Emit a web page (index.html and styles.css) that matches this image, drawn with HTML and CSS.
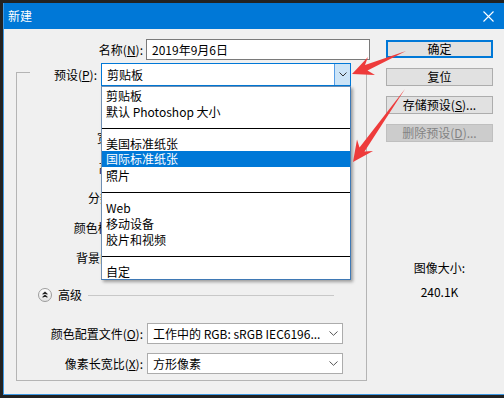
FILE: index.html
```html
<!DOCTYPE html>
<html lang="zh-CN">
<head>
<meta charset="utf-8">
<title>新建</title>
<link rel="stylesheet" href="styles.css">
</head>
<body>
<div class="window">
  <div class="titlebar">
    <span class="title">新建</span>
    <svg class="close" width="11" height="11" viewBox="0 0 11 11"><path d="M0.5 0.5L10.5 10.5M10.5 0.5L0.5 10.5" stroke="#fff" stroke-width="1.1" fill="none"/></svg>
  </div>
  <div class="content">
    <div class="main">
      <div class="name-row">
        <label class="lbl name-lbl">名称(<u>N</u>):</label>
        <div class="textbox">2019年9月6日</div>
      </div>
      <div class="preset-head">
        <span class="stub"></span>
        <label class="lbl preset-lbl">预设(<u>P</u>):</label>
        <div class="combo">
          <span class="combo-text">剪贴板</span>
          <span class="combo-btn"><svg width="8" height="5" viewBox="0 0 8 5"><path d="M0.5 0.5L4 4L7.5 0.5" fill="none" stroke="#333" stroke-width="1"/></svg></span>
          <ul class="droplist">
            <li>剪贴板</li>
            <li>默认 Photoshop 大小</li>
            <li class="sep"></li>
            <li>美国标准纸张</li>
            <li class="sel">国际标准纸张</li>
            <li>照片</li>
            <li class="sep"></li>
            <li>Web</li>
            <li>移动设备</li>
            <li>胶片和视频</li>
            <li class="sep"></li>
            <li>自定</li>
          </ul>
        </div>
      </div>
      <div class="group">
        <div class="grid">
          <label class="lbl dim">大小(<u>I</u>):</label><div class="field"></div>
          <label class="lbl">宽度(<u>W</u>):</label><div class="field"></div>
          <label class="lbl">高度(<u>H</u>):</label><div class="field"></div>
          <label class="lbl">分辨率(<u>R</u>):</label><div class="field"></div>
          <label class="lbl">颜色模式(<u>M</u>):</label><div class="field"></div>
          <label class="lbl">背景内容(<u>C</u>):</label><div class="field"></div>
        </div>
        <div class="advanced">
          <svg class="adv-icon" width="14" height="14" viewBox="0 0 14 14"><defs><linearGradient id="advg" x1="0" y1="0" x2="0" y2="1"><stop offset="0" stop-color="#ffffff"/><stop offset="1" stop-color="#e2e2e2"/></linearGradient></defs><circle cx="7" cy="7" r="6.5" fill="url(#advg)" stroke="#9c9c9c"/><path d="M4.6 6.4L7 4.2L9.4 6.4M4.6 9.4L7 7.2L9.4 9.4" fill="none" stroke="#222" stroke-width="1.2"/></svg>
          <span class="adv-text">高级</span>
          <span class="adv-line"></span>
        </div>
        <div class="grid adv-grid">
          <label class="lbl">颜色配置文件(<u>O</u>):</label>
          <div class="select"><span class="select-text">工作中的 RGB: sRGB IEC6196...</span><svg width="9" height="5" viewBox="0 0 9 5"><path d="M0.5 0.5L4.5 4.3L8.5 0.5" fill="none" stroke="#555" stroke-width="1"/></svg></div>
          <label class="lbl">像素长宽比(<u>X</u>):</label>
          <div class="select"><span class="select-text">方形像素</span><svg width="9" height="5" viewBox="0 0 9 5"><path d="M0.5 0.5L4.5 4.3L8.5 0.5" fill="none" stroke="#555" stroke-width="1"/></svg></div>
        </div>
      </div>
    </div>
    <div class="side">
      <button class="btn default">确定</button>
      <button class="btn">复位</button>
      <button class="btn">存储预设(<u>S</u>)...</button>
      <button class="btn disabled">删除预设(<u>D</u>)...</button>
      <div class="info">
        <div>图像大小:</div>
        <div class="size">240.1K</div>
      </div>
    </div>
  </div>
</div>
<svg class="arrows" width="504" height="398" viewBox="0 0 504 398">
  <polygon points="352,74 375,75 367.5,70.5 406,51 365,65 368,57" fill="#ee3b3b"/>
  <polygon points="353,162 373,151 364.5,151.5 405,89 359.5,147.5 357,139.5" fill="#ee3b3b"/>
</svg>
</body>
</html>
```

FILE: styles.css
```css
* { box-sizing: border-box; }
html, body { margin: 0; padding: 0; }
body {
  position: relative;
  width: 504px;
  height: 398px;
  overflow: hidden;
  background: #222222;
  font-family: "Noto Sans CJK SC", "Noto Sans", sans-serif;
  font-size: 12px;
  color: #000;
}
u { text-decoration: underline; text-underline-offset: 1px; }

.window {
  margin: 3px 0 0 3px;
  width: 501px;
  height: 392px;
  background: #f0f0f0;
  border-left: 1px solid #3e98e2;
  border-bottom: 1px solid #3e98e2;
}
.titlebar {
  height: 26px;
  background: #0078d7;
  color: #fff;
  display: flex;
  align-items: center;
  justify-content: space-between;
  padding: 0 10px 0 4px;
}
.title { font-size: 12px; line-height: 26px; }

.content { display: flex; padding-top: 10px; }
.main { width: 366px; }

.lbl { text-align: right; white-space: nowrap; }
.lbl.dim { color: #000; }

.name-row { display: flex; align-items: center; height: 21px; }
.name-lbl { width: 139px; margin-right: 3px; }
.textbox {
  width: 224px;
  height: 21px;
  border: 1px solid #7a7a7a;
  background: #fff;
  padding-left: 5px;
  line-height: 19px;
}

.preset-head { display: flex; height: 23px; margin-top: 3px; }
.stub {
  align-self: flex-start;
  width: 14px;
  height: 0;
  margin: 9px 0 0 12px;
  border-top: 1px solid #b4b4b4;
}
.preset-lbl { width: 67px; margin-right: 4px; align-self: center; }
.combo {
  position: relative;
  display: flex;
  width: 250px;
  height: 23px;
  border: 1px solid #0078d7;
  background: #fff;
}
.combo-text { flex: 1; padding-left: 5px; line-height: 21px; }
.combo-btn {
  width: 16px;
  background: #cce4f7;
  border-left: 1px solid #569de5;
  display: flex;
  align-items: center;
  justify-content: center;
}

.droplist {
  position: absolute;
  z-index: 5;
  top: calc(100% + 1px);
  left: -1px;
  width: 250px;
  margin: 0;
  padding: 0;
  list-style: none;
  background: #fff;
  border: 1px solid #6f8fb3;
  border-right-color: #3f79b5;
  border-bottom-color: #3f79b5;
  box-shadow: 2px 2px 3px rgba(0, 0, 0, 0.35);
}
.droplist li {
  height: 16px;
  line-height: 16px;
  padding: 1px 0 0 4px;
  white-space: nowrap;
  overflow: visible;
}
.droplist li.sep { padding: 9px 0 0 0; }
.droplist li.sep::before {
  content: "";
  display: block;
  border-top: 1px solid #000;
}
.droplist li.sel { background: #0078d7; color: #fff; padding-top: 0; }

.group {
  width: 351px;
  margin: -14px 0 0 12px;
  border: 1px solid #b4b4b4;
  border-top: none;
  padding: 24px 0 6px 0;
}
.grid {
  display: grid;
  grid-template-columns: 126px 196px;
  column-gap: 4px;
  row-gap: 8px;
  grid-auto-rows: 22px;
  align-items: center;
}
.field { height: 22px; border: 1px solid #7a7a7a; background: #fff; }

.advanced {
  display: flex;
  align-items: center;
  height: 14px;
  margin-top: 20px;
  padding-left: 21px;
}
.adv-icon { flex: none; margin-right: 6px; }
.adv-text { line-height: 14px; }
.adv-line { flex: 1; margin: 0 32px 0 6px; border-top: 1px solid #c8c8c8; }

.adv-grid { margin-top: 21px; grid-auto-rows: 21px; row-gap: 9px; }
.select {
  height: 21px;
  border: 1px solid #acacac;
  background: #fff;
  display: flex;
  align-items: center;
  padding: 0 4px 0 5px;
}
.select-text { flex: 1; white-space: nowrap; overflow: hidden; }

.side {
  width: 107px;
  margin-left: 16px;
  padding-top: 1px;
  display: flex;
  flex-direction: column;
}
.btn {
  height: 18px;
  margin: 0 0 10px 0;
  padding: 0;
  background: #e1e1e1;
  border: 1px solid #adadad;
  font: inherit;
  color: #000;
  line-height: 16px;
}
.btn.default { border: 2px solid #0078d7; line-height: 14px; }
.btn.disabled { background: #cccccc; border-color: #bfbfbf; color: #838383; }

.info { margin-top: 108px; text-align: center; line-height: 16px; }
.size { margin-top: 8px; }

.arrows { position: absolute; left: 0; top: 0; z-index: 10; }
```
